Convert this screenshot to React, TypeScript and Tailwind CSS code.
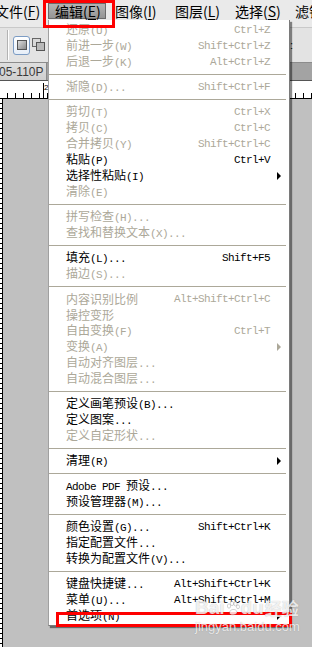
import React from "react";

type Entry =
  | { label: string; shortcut?: string; disabled?: boolean; sub?: boolean }
  | "sep";

const entries: Entry[] = [
  { label: "还原(U)", shortcut: "Ctrl+Z", disabled: true },
  { label: "前进一步(W)", shortcut: "Shift+Ctrl+Z", disabled: true },
  { label: "后退一步(K)", shortcut: "Alt+Ctrl+Z", disabled: true },
  "sep",
  { label: "渐隐(D)...", shortcut: "Shift+Ctrl+F", disabled: true },
  "sep",
  { label: "剪切(T)", shortcut: "Ctrl+X", disabled: true },
  { label: "拷贝(C)", shortcut: "Ctrl+C", disabled: true },
  { label: "合并拷贝(Y)", shortcut: "Shift+Ctrl+C", disabled: true },
  { label: "粘贴(P)", shortcut: "Ctrl+V" },
  { label: "选择性粘贴(I)", sub: true },
  { label: "清除(E)", disabled: true },
  "sep",
  { label: "拼写检查(H)...", disabled: true },
  { label: "查找和替换文本(X)...", disabled: true },
  "sep",
  { label: "填充(L)...", shortcut: "Shift+F5" },
  { label: "描边(S)...", disabled: true },
  "sep",
  { label: "内容识别比例", shortcut: "Alt+Shift+Ctrl+C", disabled: true },
  { label: "操控变形", disabled: true },
  { label: "自由变换(F)", shortcut: "Ctrl+T", disabled: true },
  { label: "变换(A)", sub: true, disabled: true },
  { label: "自动对齐图层...", disabled: true },
  { label: "自动混合图层...", disabled: true },
  "sep",
  { label: "定义画笔预设(B)..." },
  { label: "定义图案..." },
  { label: "定义自定形状...", disabled: true },
  "sep",
  { label: "清理(R)", sub: true },
  "sep",
  { label: "Adobe PDF 预设..." },
  { label: "预设管理器(M)..." },
  "sep",
  { label: "颜色设置(G)...", shortcut: "Shift+Ctrl+K" },
  { label: "指定配置文件..." },
  { label: "转换为配置文件(V)..." },
  "sep",
  { label: "键盘快捷键...", shortcut: "Alt+Shift+Ctrl+K" },
  { label: "菜单(U)...", shortcut: "Alt+Shift+Ctrl+M" },
  { label: "首选项(N)", sub: true },
];

function Mixed({ text }: { text: string }) {
  const parts = text.split(/([\x00-\x7F]+)/).filter((p) => p.length > 0);
  return (
    <>
      {parts.map((p, i) =>
        /^[\x00-\x7F]+$/.test(p) ? (
          <span
            key={i}
            className="font-['Liberation_Mono',monospace] text-[11px] tracking-[-0.6px] whitespace-pre"
          >
            {p}
          </span>
        ) : (
          <span key={i}>{p}</span>
        )
      )}
    </>
  );
}

function Arrow({ color }: { color: string }) {
  return (
    <svg width="5" height="8" viewBox="0 0 5 8">
      <path d="M0 0 L4 4 L0 8 Z" fill={color} />
    </svg>
  );
}

function MenuBarItem({
  a,
  k,
  active,
}: {
  a: string;
  k: string;
  active?: boolean;
}) {
  return (
    <div
      className={
        active
          ? "shrink-0 w-[58px] h-[16px] mt-[3px] pl-[6px] flex items-center border border-[#6b6b6b] bg-[linear-gradient(#b4b4b4,#959595)] text-black"
          : "shrink-0 w-[58px] h-[16px] mt-[3px] pl-[7px] flex items-center text-black"
      }
    >
      <span className="whitespace-nowrap leading-[16px]">
        {a}(<span className="underline underline-offset-2">{k}</span>)
      </span>
    </div>
  );
}

export default function App() {
  return (
    <div className="relative w-[312px] h-[647px] overflow-hidden bg-[#c0c0c0] flex flex-col font-['Noto_Sans_CJK_SC',sans-serif]">
      {/* Menu bar */}
      <div className="h-[27px] shrink-0 bg-[#eaeaea] flex gap-[2px] ml-[-12px] text-[14px] overflow-hidden">
        <MenuBarItem a="文件" k="F" />
        <MenuBarItem a="编辑" k="E" active />
        <MenuBarItem a="图像" k="I" />
        <MenuBarItem a="图层" k="L" />
        <MenuBarItem a="选择" k="S" />
        <div className="shrink-0 h-[16px] mt-[3px] pl-[7px] flex items-center whitespace-nowrap leading-[16px]">
          滤镜(T)
        </div>
      </div>

      {/* Options toolbar */}
      <div className="h-[35px] shrink-0 bg-[#e3e3e3] border-t border-[#c9c9c9] flex items-center">
        <div className="ml-[7px] w-px h-[30px] bg-[#b3b3b3]" />
        <div className="w-px h-[30px] bg-white" />
        <div className="ml-[4px] w-[17px] h-[19px] rounded-[3px] border border-[#7c9cc4] bg-[linear-gradient(#ffffff,#e6eef8)] flex items-center justify-center">
          <div className="w-[10px] h-[10px] border border-[#555] bg-[linear-gradient(135deg,#dcdcdc,#8a8a8a)]" />
        </div>
        <svg width="14" height="14" viewBox="0 0 14 14" className="ml-[2px]">
          <rect x="0.5" y="0.5" width="8" height="8" fill="#d8d8d8" stroke="#666" />
          <rect x="4.5" y="4.5" width="8" height="8" fill="#b9b9b9" stroke="#555" />
        </svg>
        <div className="flex-1" />
        <span className="mr-[19px] text-[11px] leading-[12px] text-black font-['Liberation_Sans',sans-serif]">
          :
        </span>
      </div>

      {/* Document tab row */}
      <div className="h-[18px] shrink-0 bg-[#a3a3a3] border-t border-[#8c8c8c] flex">
        <div className="w-[47px] h-full bg-[linear-gradient(#dedede,#cfcfcf)] border-r border-[#8a8a8a] flex items-center overflow-hidden">
          <span className="ml-[-1px] text-[12px] leading-[14px] text-[#3a3a3a] font-['Liberation_Sans',sans-serif] whitespace-nowrap">
            05-110P
          </span>
        </div>
      </div>

      {/* Horizontal ruler */}
      <div className="h-[19px] shrink-0 bg-white border-t border-[#555] border-b border-b-black relative flex items-end">
        <div className="w-full h-[5px] bg-[repeating-linear-gradient(90deg,transparent_0,transparent_7px,#000_7px,#000_8px)]" />
        <div className="absolute left-[43px] top-[2px] w-px h-[15px] bg-black" />
        <span className="absolute left-[44px] top-[2px] text-[8px] leading-[9px] font-['Liberation_Sans',sans-serif]">
          2
        </span>
      </div>

      {/* Canvas area */}
      <div className="flex-1 flex">
        <div className="w-[3px] h-full bg-[repeating-linear-gradient(180deg,white_0,white_4px,#000_4px,#000_5px)] border-r border-black" />
        <div className="flex-1 bg-[#c0c0c0]" />
      </div>

      {/* Dropdown menu */}
      <div className="absolute left-[48px] top-[20px] w-[242px] bg-white border-l border-[#a0a0a0] border-r border-r-[#7a7a7a] border-b border-b-[#7a7a7a] shadow-[2px_2px_1px_rgba(0,0,0,0.45)] pt-[2px] pb-[1px] text-[12px] leading-[16px]">
        {entries.map((e, i) =>
          e === "sep" ? (
            <div key={i} className="h-[9px] flex items-center">
              <div className="flex-1 h-px bg-[#aca899] mr-[3px]" />
            </div>
          ) : (
            <div
              key={i}
              className={
                e.disabled
                  ? "h-[16px] flex items-center pl-[17px] text-[#aca899]"
                  : "h-[16px] flex items-center pl-[17px] text-black"
              }
            >
              <div className="flex-1 whitespace-nowrap">
                <Mixed text={e.label} />
              </div>
              {e.shortcut ? (
                <span className="font-['Liberation_Mono',monospace] text-[11px] tracking-[-0.6px] whitespace-nowrap">
                  {e.shortcut}
                </span>
              ) : null}
              <div className="w-[19px] pl-[7px] flex items-center">
                {e.sub ? <Arrow color={e.disabled ? "#aca899" : "#000"} /> : null}
              </div>
            </div>
          )
        )}
      </div>

      {/* Red annotation boxes */}
      <div className="absolute left-[43px] top-0 w-[72px] h-[28px] border-[3px] border-[#fe0000]" />
      <div className="absolute left-[56px] top-[612px] w-[236px] h-[15px] border-[3px] border-[#fe0000]" />

      {/* Watermark */}
      <div className="absolute left-[195px] top-[598px] flex flex-col text-white/80 [text-shadow:0_0_1px_rgba(0,0,0,0.3)]">
        <div className="flex items-center h-[20px] font-['Liberation_Sans',sans-serif] text-[19px] font-bold leading-[20px]">
          <span>Bai</span>
          <svg width="14" height="15" viewBox="0 0 14 15" className="mx-[1px]">
            <g fill="rgba(255,255,255,0.8)" stroke="rgba(0,0,0,0.25)" strokeWidth="0.7">
              <ellipse cx="3" cy="5" rx="1.6" ry="2.2" />
              <ellipse cx="6" cy="2.5" rx="1.6" ry="2.2" />
              <ellipse cx="9.5" cy="2.8" rx="1.6" ry="2.2" />
              <ellipse cx="12" cy="5.8" rx="1.5" ry="2" />
              <path d="M3.5 12 C3.5 8 10 7 11 11 C11.5 14 4 15 3.5 12 Z" />
            </g>
          </svg>
          <span>du</span>
          <span className="ml-[1px] text-[17px] font-['Noto_Sans_CJK_SC',sans-serif]">经验</span>
        </div>
        <div className="text-[13px] leading-[14px] mt-[2px] font-['Liberation_Sans',sans-serif]">
          jingyan.baidu.com
        </div>
      </div>
    </div>
  );
}
